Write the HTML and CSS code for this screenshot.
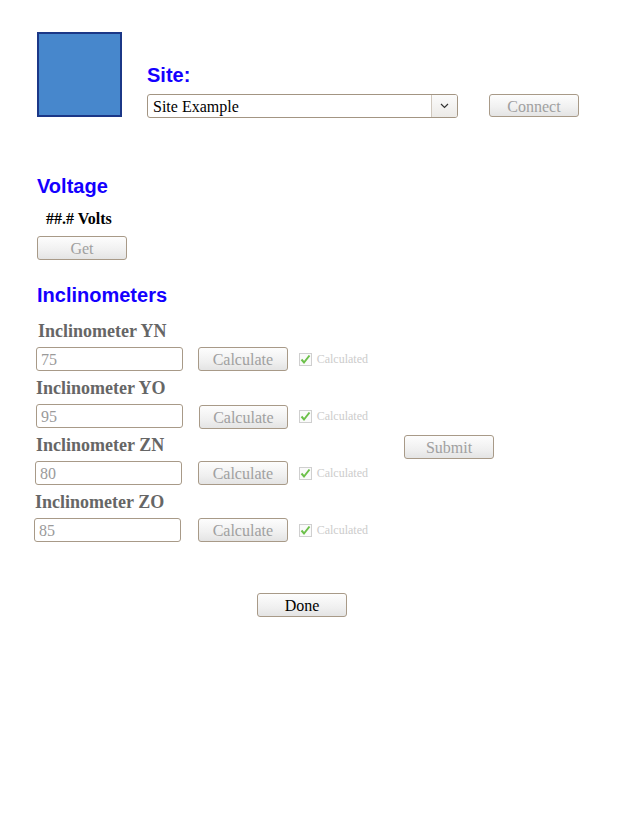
FILE: index.html
```html
<!DOCTYPE html>
<html>
<head>
<meta charset="utf-8">
<title>Site</title>
<link rel="stylesheet" href="styles.css">
</head>
<body>
<div class="page">
  <div class="header">
    <div class="logo"></div>
    <div class="site-col">
      <div class="heading">Site:</div>
      <div class="site-row">
        <div class="select">
          <span class="select-text">Site Example</span>
          <span class="select-arrow"><svg width="9" height="6" viewBox="0 0 9 6"><polyline points="1,1 4.5,4.5 8,1" fill="none" stroke="#333" stroke-width="1.2"/></svg></span>
        </div>
        <button class="btn connect">Connect</button>
      </div>
    </div>
  </div>

  <div class="heading voltage">Voltage</div>
  <div class="volts">##.# Volts</div>
  <button class="btn get">Get</button>

  <div class="heading incl-heading">Inclinometers</div>
  <div class="incl">
    <div class="incl-list">
      <div class="incl-row">
        <div class="incl-label lbl-yn">Inclinometer YN</div>
        <div class="incl-fields">
          <input class="field" type="text" value="75" disabled>
          <button class="btn calc">Calculate</button>
          <span class="check"><svg width="13" height="13" viewBox="0 0 13 13"><rect x="0.5" y="0.5" width="12" height="12" fill="#fafafa" stroke="#cfcfcf"/><polyline points="2.5,6.5 5,9.5 10.5,2.5" fill="none" stroke="#6cc04a" stroke-width="2"/></svg><span class="check-text">Calculated</span></span>
        </div>
      </div>
      <div class="incl-row">
        <div class="incl-label">Inclinometer YO</div>
        <div class="incl-fields">
          <input class="field" type="text" value="95" disabled>
          <button class="btn calc calc-yo">Calculate</button>
          <span class="check"><svg width="13" height="13" viewBox="0 0 13 13"><rect x="0.5" y="0.5" width="12" height="12" fill="#fafafa" stroke="#cfcfcf"/><polyline points="2.5,6.5 5,9.5 10.5,2.5" fill="none" stroke="#6cc04a" stroke-width="2"/></svg><span class="check-text">Calculated</span></span>
        </div>
      </div>
      <div class="incl-row">
        <div class="incl-label">Inclinometer ZN</div>
        <div class="incl-fields shift1">
          <input class="field" type="text" value="80" disabled>
          <button class="btn calc">Calculate</button>
          <span class="check"><svg width="13" height="13" viewBox="0 0 13 13"><rect x="0.5" y="0.5" width="12" height="12" fill="#fafafa" stroke="#cfcfcf"/><polyline points="2.5,6.5 5,9.5 10.5,2.5" fill="none" stroke="#6cc04a" stroke-width="2"/></svg><span class="check-text">Calculated</span></span>
        </div>
      </div>
      <div class="incl-row">
        <div class="incl-label shift1">Inclinometer ZO</div>
        <div class="incl-fields shift2">
          <input class="field" type="text" value="85" disabled>
          <button class="btn calc">Calculate</button>
          <span class="check"><svg width="13" height="13" viewBox="0 0 13 13"><rect x="0.5" y="0.5" width="12" height="12" fill="#fafafa" stroke="#cfcfcf"/><polyline points="2.5,6.5 5,9.5 10.5,2.5" fill="none" stroke="#6cc04a" stroke-width="2"/></svg><span class="check-text">Calculated</span></span>
        </div>
      </div>
    </div>
    <button class="btn submit">Submit</button>
  </div>

  <button class="btn done">Done</button>
</div>
</body>
</html>
```

FILE: styles.css
```css
html, body {
  margin: 0;
  padding: 0;
  background: #ffffff;
}

body {
  font-family: "Liberation Serif", "Times New Roman", serif;
  font-size: 16px;
  color: #000;
}

.page {
  padding: 32px 0 0 36px;
  width: 591px;
}

.header {
  display: flex;
  align-items: flex-start;
  height: 86px;
}

.logo {
  width: 85px;
  height: 85px;
  box-sizing: border-box;
  margin-left: 1px;
  border: 2px solid #1b3787;
  background: #4787cc;
}

.site-col {
  margin-left: 25px;
  padding-top: 32px;
  display: flex;
  flex-direction: column;
}

.heading {
  font-family: "Liberation Sans", Arial, sans-serif;
  font-weight: bold;
  font-size: 20px;
  line-height: 23px;
  color: #1400ff;
}

.site-row {
  display: flex;
  align-items: flex-start;
  margin-top: 7px;
}

.select {
  width: 311px;
  height: 24px;
  box-sizing: border-box;
  border: 1px solid #a39583;
  border-radius: 3px;
  display: flex;
  align-items: stretch;
  background: #fff;
}

.select-text {
  flex: 1;
  padding-left: 5px;
  line-height: 23px;
  font-size: 16px;
}

.select-arrow {
  width: 25px;
  border-left: 1px solid #cfc7bd;
  background: linear-gradient(#fbfbfb, #eceae7);
  display: flex;
  align-items: center;
  justify-content: center;
  border-radius: 0 2px 2px 0;
}

.btn {
  width: 90px;
  height: 24px;
  box-sizing: border-box;
  border: 1px solid #a89a88;
  border-radius: 3px;
  background: linear-gradient(#fdfdfd, #f0f0f0 60%, #e4e4e4);
  font-family: "Liberation Serif", "Times New Roman", serif;
  font-size: 16px;
  color: #a0a0a0;
  padding: 2px 0 0 0;
  line-height: 20px;
  display: block;
}

.connect {
  margin-left: 31px;
  height: 23px;
}

.voltage {
  margin-top: 57px;
  margin-left: 1px;
}

.volts {
  margin-top: 12px;
  margin-left: 10px;
  font-weight: bold;
  font-size: 16px;
  line-height: 18px;
}

.get {
  margin-top: 8px;
  margin-left: 1px;
}

.incl-heading {
  margin-top: 24px;
  margin-left: 1px;
}

.incl {
  display: flex;
  align-items: flex-start;
  margin-top: 14px;
}

.incl-list {
  width: 332px;
  display: flex;
  flex-direction: column;
  gap: 7px;
}

.incl-row {
  display: flex;
  flex-direction: column;
  gap: 5px;
}

.incl-label {
  font-weight: bold;
  font-size: 18px;
  line-height: 21px;
  color: #666666;
}

.lbl-yn {
  margin-left: 2px;
}

.incl-fields {
  display: flex;
  align-items: center;
  height: 24px;
}

.shift1 {
  margin-left: -1px;
}

.shift2 {
  margin-left: -2px;
}

.field {
  width: 147px;
  height: 24px;
  box-sizing: border-box;
  border: 1px solid #a89a88;
  border-radius: 3px;
  background: #fff;
  padding: 1px 0 0 4px;
  margin: 0;
  font-family: "Liberation Serif", "Times New Roman", serif;
  font-size: 16px;
  color: #9a9a9a;
  -webkit-text-fill-color: #9a9a9a;
  opacity: 1;
}

.calc {
  margin-left: 15px;
}

.shift1 .calc {
  margin-left: 16px;
}

.shift2 .calc {
  margin-left: 17px;
}

.calc-yo {
  margin-left: 16px;
  position: relative;
  top: 1px;
}

.check {
  margin-left: 11px;
  display: flex;
  align-items: center;
}

.check svg {
  display: block;
}

.check-text {
  margin-left: 5px;
  font-size: 12px;
  color: #cccccc;
}

.submit {
  margin-left: 36px;
  margin-top: 114px;
}

.done {
  margin-top: 51px;
  margin-left: 221px;
  color: #000;
}
```
